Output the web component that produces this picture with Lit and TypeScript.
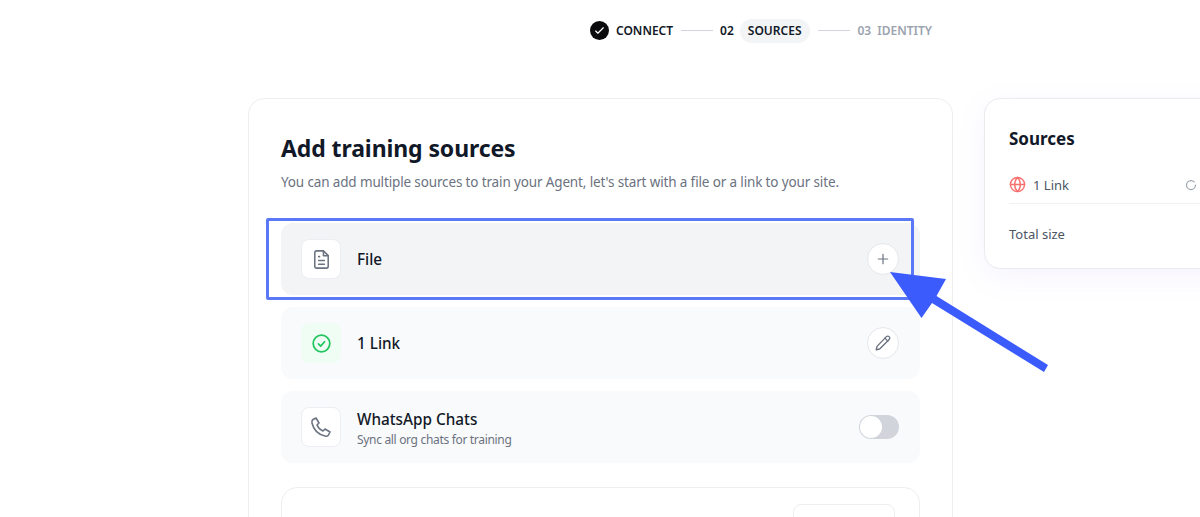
import { LitElement, html, css } from "lit";
import { customElement } from "lit/decorators.js";

@customElement("app-root")
export class AppRoot extends LitElement {
  static styles = css`
    :host {
      display: block;
      position: relative;
      width: 1200px;
      height: 517px;
      overflow: hidden;
      background: #fff;
      font-family: "Noto Sans", "Liberation Sans", sans-serif;
      color: #111827;
    }
    .stepper {
      display: flex;
      align-items: center;
      height: 24px;
      padding: 18px 0 0 590px;
      font-size: 12px;
      font-weight: 600;
      line-height: 24px;
    }
    .stepper > span {
      position: relative;
      top: 1px;
    }
    .check {
      width: 19px;
      height: 19px;
      border-radius: 50%;
      background: #0b0b0d;
      display: flex;
      align-items: center;
      justify-content: center;
      margin-right: 7px;
    }
    .line {
      width: 32px;
      height: 1px;
      background: #d1d5db;
      margin: 0 8px;
    }
    .line.first {
      margin-right: 7px;
    }
    .num {
      margin-right: 6px;
    }
    .pill {
      background: #f3f4f6;
      border-radius: 12px;
      padding: 0 8px;
    }
    .muted {
      color: #9ca3af;
    }
    .layout {
      display: flex;
      align-items: flex-start;
      gap: 31px;
      padding: 56px 0 0 248px;
    }
    .main {
      flex: none;
      width: 705px;
      height: 500px;
      box-sizing: border-box;
      border: 1px solid #eceef1;
      border-radius: 16px;
      padding: 32px 32px 0 32px;
    }
    h1 {
      margin: 0;
      font-size: 23px;
      line-height: 35px;
      letter-spacing: -0.1px;
      font-weight: 700;
      color: #111827;
    }
    .sub {
      margin: 6px 0 31px;
      font-size: 13.5px;
      line-height: 20px;
      letter-spacing: -0.14px;
      color: #6b7280;
    }
    .rows {
      display: flex;
      flex-direction: column;
      gap: 12px;
    }
    .row {
      display: flex;
      align-items: center;
      height: 72px;
      box-sizing: border-box;
      padding: 0 21px 0 20px;
      border-radius: 12px;
      background: #f9fafb;
    }
    .row.active {
      background: #f3f4f6;
    }
    .tile {
      flex: none;
      width: 40px;
      height: 40px;
      box-sizing: border-box;
      border-radius: 8px;
      background: #fff;
      border: 1px solid #eceef1;
      display: flex;
      align-items: center;
      justify-content: center;
      margin-right: 16px;
    }
    .tile.ok {
      background: #f0fdf4;
      border: none;
    }
    .label {
      flex: 1;
      font-size: 15.3px;
      line-height: 20px;
      font-weight: 500;
      color: #111827;
    }
    .label.two {
      padding-top: 4px;
    }
    .hint {
      margin-top: 2px;
      font-size: 12px;
      line-height: 18px;
      letter-spacing: -0.32px;
      font-weight: 400;
      color: #6b7280;
    }
    .round {
      flex: none;
      width: 32px;
      height: 32px;
      box-sizing: border-box;
      border-radius: 50%;
      background: #fff;
      border: 1px solid #e5e7eb;
      display: flex;
      align-items: center;
      justify-content: center;
    }
    .toggle {
      flex: none;
      width: 40px;
      height: 24px;
      border-radius: 12px;
      background: #d1d5db;
      box-sizing: border-box;
      padding: 1px;
    }
    .knob {
      width: 22px;
      height: 22px;
      border-radius: 50%;
      background: #fff;
    }
    .next {
      height: 120px;
      margin-top: 24px;
      box-sizing: border-box;
      border: 1px solid #eceef1;
      border-radius: 16px;
      display: flex;
      justify-content: flex-end;
      padding: 16px 24px 0 0;
    }
    .next-btn {
      width: 102px;
      height: 60px;
      box-sizing: border-box;
      border: 1px solid #eceef1;
      border-radius: 8px;
    }
    .side {
      flex: none;
      width: 300px;
      height: 171px;
      box-sizing: border-box;
      background: #fff;
      border: 1px solid #e9ebef;
      border-radius: 16px;
      padding: 25px 24px 24px;
      box-shadow: 0 8px 32px rgba(124, 92, 220, 0.07);
    }
    h2 {
      margin: 0 0 14px;
      font-size: 17px;
      line-height: 30px;
      font-weight: 700;
      color: #111827;
    }
    .side-row {
      display: flex;
      align-items: center;
      gap: 7px;
      height: 33px;
      padding-bottom: 2px;
      border-bottom: 1px solid #f0f1f3;
      font-size: 13px;
      color: #4b5563;
    }
    .side-row span {
      flex: 1;
    }
    .spin {
      margin-right: 62px;
    }
    .total {
      margin-top: 20px;
      font-size: 13px;
      line-height: 20px;
      color: #4b5563;
    }
    /* annotation drawn over the screenshot */
    .mark {
      position: absolute;
      left: 266px;
      top: 218px;
      width: 648px;
      height: 82px;
      box-sizing: border-box;
      border: 3px solid #5b79f7;
      border-radius: 2px;
    }
    .arrow {
      position: absolute;
      left: 880px;
      top: 260px;
    }
  `;

  render() {
    return html`
      <div class="stepper">
        <div class="check">
          <svg width="13" height="13" viewBox="0 0 24 24" fill="none" stroke="#fff" stroke-width="2.200" stroke-linecap="round" stroke-linejoin="round">
            <path d="M5 13l4 4L19 7" />
          </svg>
        </div>
        <span>CONNECT</span>
        <div class="line first"></div>
        <span class="num">02</span>
        <span class="pill">SOURCES</span>
        <div class="line"></div>
        <span class="num muted">03</span>
        <span class="muted">IDENTITY</span>
      </div>
      <div class="layout">
        <section class="main">
          <h1>Add training sources</h1>
          <p class="sub">You can add multiple sources to train your Agent, let's start with a file or a link to your site.</p>
          <div class="rows">
            <div class="row active">
              <div class="tile">
                <svg width="23" height="23" viewBox="0 0 24 24" fill="none" stroke="#6b7280" stroke-width="1.600" stroke-linecap="round" stroke-linejoin="round">
                  <path d="M14 3H7a2 2 0 0 0-2 2v14a2 2 0 0 0 2 2h10a2 2 0 0 0 2-2V8z" />
                  <path d="M14 3v5h5M9 9h1M9 13h6M9 17h6" />
                </svg>
              </div>
              <div class="label">File</div>
              <div class="round">
                <svg width="16" height="16" viewBox="0 0 24 24" fill="none" stroke="#6b7280" stroke-width="1.800" stroke-linecap="round">
                  <path d="M12 5v14M5 12h14" />
                </svg>
              </div>
            </div>
            <div class="row">
              <div class="tile ok">
                <svg width="21" height="21" viewBox="0 0 24 24" fill="none" stroke="#22c55e" stroke-width="2" stroke-linecap="round" stroke-linejoin="round">
                  <circle cx="12" cy="12" r="9.500" />
                  <path d="M8.500 12.500l2.500 2.500 4.500-5" />
                </svg>
              </div>
              <div class="label">1 Link</div>
              <div class="round">
                <svg width="18" height="18" viewBox="0 0 24 24" fill="none" stroke="#6b7280" stroke-width="1.800" stroke-linecap="round" stroke-linejoin="round">
                  <path d="M16.500 3.500a2.600 2.600 0 0 1 3.700 3.700L7.500 20 3 21l1-4.500z" />
                  <path d="M14.500 5.500l4 4" />
                </svg>
              </div>
            </div>
            <div class="row">
              <div class="tile">
                <svg width="24" height="24" viewBox="0 0 24 24" fill="none" stroke="#6b7280" stroke-width="1.600" stroke-linecap="round" stroke-linejoin="round">
                  <path d="M4 4.500 7 3l3 5-2 2c1 2.500 3.500 5 6 6l2-2 5 3-1.500 3c-.5 1-2 1.500-3.500 1C9.500 19.500 4.500 14.500 3 8c-.3-1.500 0-2.800 1-3.500z" />
                </svg>
              </div>
              <div class="label two">
                WhatsApp Chats
                <div class="hint">Sync all org chats for training</div>
              </div>
              <div class="toggle"><div class="knob"></div></div>
            </div>
          </div>
          <div class="next"><div class="next-btn"></div></div>
        </section>
        <aside class="side">
          <h2>Sources</h2>
          <div class="side-row">
            <svg width="17" height="17" viewBox="0 0 24 24" fill="none" stroke="#f87171" stroke-width="2" stroke-linecap="round">
              <circle cx="12" cy="12" r="10" />
              <path d="M2 12h20M12 2c3 3 4 6.500 4 10s-1 7-4 10c-3-3-4-6.500-4-10s1-7 4-10z" />
            </svg>
            <span>1 Link</span>
            <svg class="spin" width="12" height="12" viewBox="0 0 24 24" fill="none" stroke="#9ca3af" stroke-width="2.500" stroke-linecap="round">
              <path d="M21 12a9 9 0 1 1-9-9c2.500 0 4.700 1 6.300 2.700" />
            </svg>
          </div>
          <div class="total">Total size</div>
        </aside>
      </div>
      <div class="mark"></div>
      <svg class="arrow" width="180" height="120" viewBox="880 260 180 120">
        <path d="M890 272 L946 279 L936.500 296 L1048 365 L1044 372 L932 303 L921.500 318 Z" fill="#3b5bfd" />
      </svg>
    `;
  }
}
